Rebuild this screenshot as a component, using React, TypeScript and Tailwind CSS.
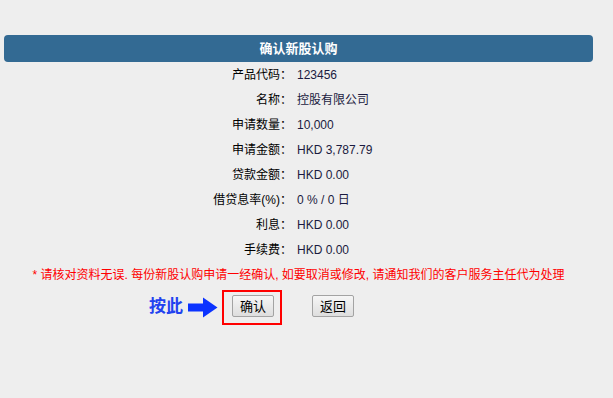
const rows: [string, string][] = [
  ["产品代码：", "123456"],
  ["名称：", "控股有限公司"],
  ["申请数量：", "10,000"],
  ["申请金额：", "HKD 3,787.79"],
  ["贷款金额：", "HKD 0.00"],
  ["借贷息率(%)：", "0 % / 0 日"],
  ["利息：", "HKD 0.00"],
  ["手续费：", "HKD 0.00"],
];

const font = { fontFamily: '"Liberation Sans", "Noto Sans CJK SC", sans-serif' };

function ArrowRight() {
  return (
    <svg width="30" height="21" viewBox="0 0 30 21">
      <path d="M0 6.5 H15 V0.5 L29.5 10.5 L15 20.5 V14.5 H0 Z" fill="#0b33ff" />
    </svg>
  );
}

export default function App() {
  return (
    <div className="min-h-[398px] w-full bg-[#eeeeee] text-[12px] text-black" style={font}>
      <div className="w-[597px] px-[4px] pt-[35px]">
        <div className="flex h-[27px] items-center justify-center rounded-[4px] bg-[#336a93] text-[13px] font-bold text-white">
          确认新股认购
        </div>

        <div>
          {rows.map(([label, value]) => (
            <div key={label} className="flex h-[25px] items-center">
              <div className="w-[288px] text-right">{label}</div>
              <div className="pl-[5px] text-[#1a1a40]">{value}</div>
            </div>
          ))}
        </div>

        <div className="flex h-[25px] items-center justify-center text-[#ff0000]">
          * 请核对资料无误. 每份新股认购申请一经确认, 如要取消或修改, 请通知我们的客户服务主任代为处理
        </div>

        <div className="flex items-start pl-[145px] pt-[3px]">
          <span className="mt-[7px] text-[17px] font-bold leading-[20px] text-[#2242f0]">按此</span>
          <span className="ml-[5px] mt-[7px]">
            <ArrowRight />
          </span>
          <div className="ml-[4px] h-[35px] w-[60px] border-2 border-[#ff0000] pl-[8px] pt-[3px]">
            <button className="h-[22px] w-[42px] rounded-[2px] border border-[#a3a3a3] bg-gradient-to-b from-[#f6f6f6] to-[#dedede] text-[13px] leading-none text-black">
              确认
            </button>
          </div>
          <button className="ml-[30px] mt-[5px] h-[22px] w-[42px] rounded-[2px] border border-[#a3a3a3] bg-gradient-to-b from-[#f6f6f6] to-[#dedede] text-[13px] leading-none text-black">
            返回
          </button>
        </div>
      </div>
    </div>
  );
}
